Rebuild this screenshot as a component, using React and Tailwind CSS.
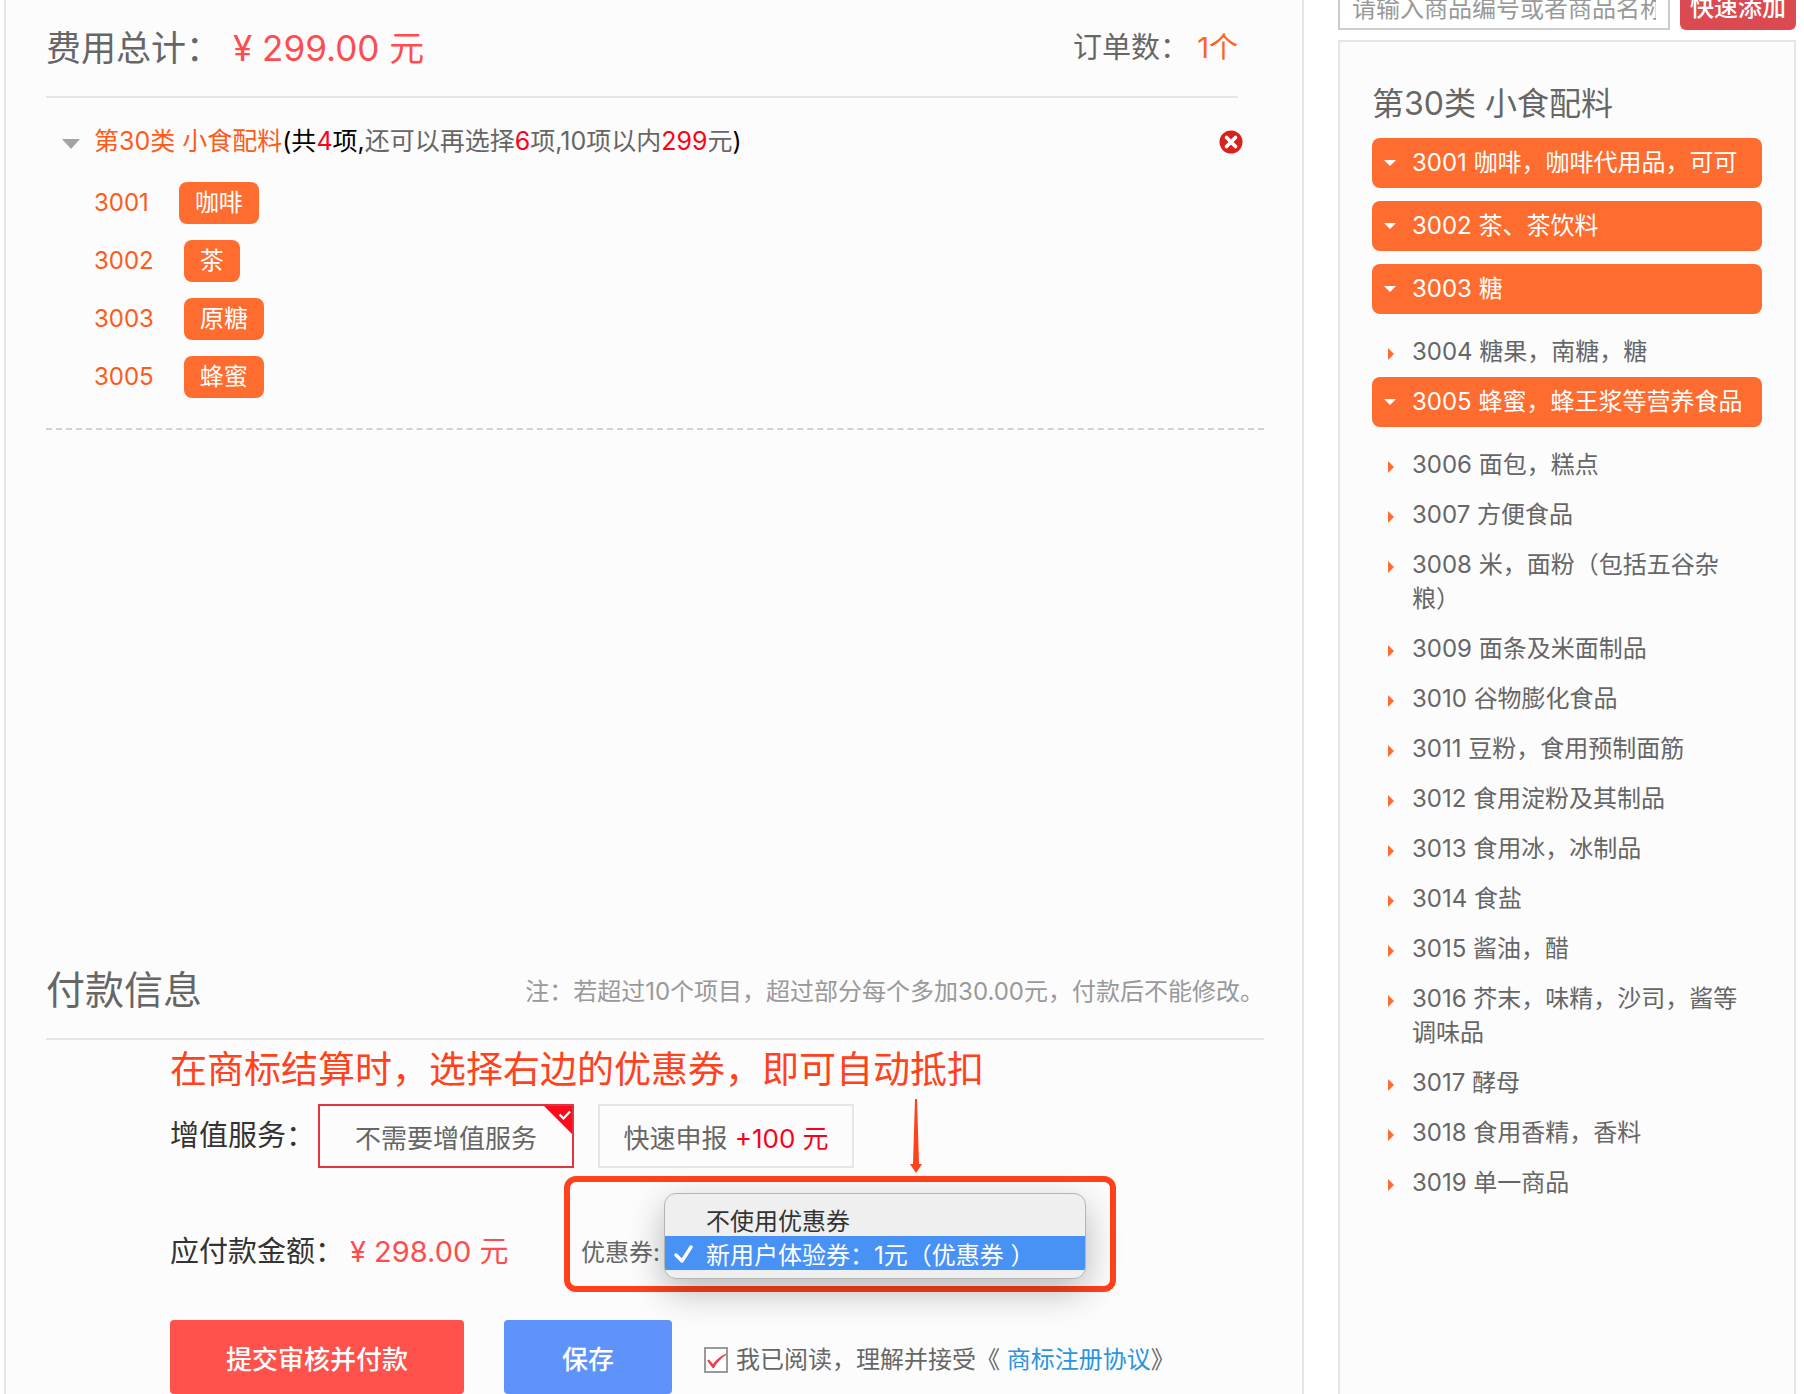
import { useState } from "react";
import clsx from "clsx";

const picked = [
    { code: "3001", name: "咖啡" },
    { code: "3002", name: "茶" },
    { code: "3003", name: "原糖" },
    { code: "3005", name: "蜂蜜" },
];

const groups = [
    { code: "3001", name: "咖啡，咖啡代用品，可可", active: true },
    { code: "3002", name: "茶、茶饮料", active: true },
    { code: "3003", name: "糖", active: true },
    { code: "3004", name: "糖果，南糖，糖" },
    { code: "3005", name: "蜂蜜，蜂王浆等营养食品", active: true },
    { code: "3006", name: "面包，糕点" },
    { code: "3007", name: "方便食品" },
    { code: "3008", name: "米，面粉（包括五谷杂粮）" },
    { code: "3009", name: "面条及米面制品" },
    { code: "3010", name: "谷物膨化食品" },
    { code: "3011", name: "豆粉，食用预制面筋" },
    { code: "3012", name: "食用淀粉及其制品" },
    { code: "3013", name: "食用冰，冰制品" },
    { code: "3014", name: "食盐" },
    { code: "3015", name: "酱油，醋" },
    { code: "3016", name: "芥末，味精，沙司，酱等调味品" },
    { code: "3017", name: "酵母" },
    { code: "3018", name: "食用香精，香料" },
    { code: "3019", name: "单一商品" },
];

const CloseIcon = () => (
    <svg viewBox="0 0 24 24" className="size-6">
        <circle cx="12" cy="12" r="11.5" fill="#d6231f" />
        <path d="M7.500 7.500l9 9M16.500 7.500l-9 9" stroke="#fff" strokeWidth="3.6" strokeLinecap="round" />
    </svg>
);

const GroupItem = ({ group }) => (
    <li className={clsx(group.active && "mb-[13px]")}>
        <button
            type="button"
            className={clsx(
                "flex w-full items-start rounded-lg py-2 pr-4 text-left text-2xl leading-[34px]",
                group.active ? "bg-[#ff6c2f] text-white" : "text-[#666]"
            )}
        >
            <span className="flex h-[34px] w-10 shrink-0 items-center pl-3">
                {group.active ? (
                    <svg viewBox="0 0 12 6" className="h-1.5 w-3">
                        <path d="M0 0h12L6 6z" fill="#fff" />
                    </svg>
                ) : (
                    <svg viewBox="0 0 6 12" className="ml-1 mt-1 h-3 w-1.5">
                        <path d="M0 0v12l6-6z" fill="#ff6c2f" />
                    </svg>
                )}
            </span>
            <span>{group.code} {group.name}</span>
        </button>
    </li>
);

const CouponSelect = () => {
    const [coupon, setCoupon] = useState("new");

    return (
        <div className="flex h-[116px] w-[552px] items-end rounded-xl border-6 border-[#ff421c] pb-[7px] pl-[11px]">
            <label htmlFor="coupon" className="mb-[9px] w-[83px] whitespace-nowrap text-2xl leading-[34px] text-[#666]">
                优惠券:
            </label>
            <div className="relative">
                <select
                    id="coupon"
                    size={2}
                    value={coupon}
                    onChange={(e) => setCoupon(e.target.value)}
                    className="block h-[86px] w-[422px] appearance-none overflow-hidden rounded-xl border border-[#b5b5b5] bg-[#efefef] py-2 text-2xl text-[#333] shadow-[0_12px_36px_rgba(0,0,0,0.28)] outline-none"
                >
                    <option value="none" className="h-[34px] min-h-0 p-0 pl-[41px] leading-[34px] checked:bg-[#4992f5] checked:text-white">
                        不使用优惠券
                    </option>
                    <option value="new" className="h-[34px] min-h-0 p-0 pl-[41px] leading-[34px] checked:bg-[#4992f5] checked:text-white">
                        新用户体验券：1元（优惠券 ）
                    </option>
                </select>
                <svg
                    viewBox="0 0 20 18"
                    className={clsx("pointer-events-none absolute left-2.5 h-[18px] w-5", coupon === "new" ? "top-[52px]" : "top-[18px]")}
                >
                    <path d="M2 10l6 6L17 2" fill="none" stroke="#fff" strokeWidth="3.4" strokeLinecap="round" strokeLinejoin="round" />
                </svg>
            </div>
        </div>
    );
};

const OrderSummary = () => (
    <section>
        <div className="mr-[26px] flex h-[98px] items-center justify-between border-b-2 border-[#e6e6e6] text-[#666]">
            <h2 className="flex gap-3 text-[35px]">
                费用总计：<span className="text-[#ff4c4f]">¥ 299.00 元</span>
            </h2>
            <p className="text-[29px]">
                订单数： <span className="text-[#ff6420]">1个</span>
            </p>
        </div>

        <div className="border-b-2 border-dashed border-[#d2d2d2] pb-[30px]">
            <div className="flex h-[84px] items-center pr-[21px] pt-1">
                <svg viewBox="0 0 18 10" className="mt-1 ml-4 mr-3.5 h-2.5 w-[18px]">
                    <path d="M0 0h18L9 10z" fill="#a3a3a3" />
                </svg>
                <h3 className="flex-1 text-[25px] text-black">
                    <span className="text-[#ff5a1a]">第30类 小食配料</span>
                    (共<span className="text-[#ff0018]">4</span>项,
                    <span className="text-[#666]">
                        还可以再选择<span className="text-[#ff0018]">6</span>项,10项以内<span className="text-[#ff0018]">299</span>元
                    </span>)
                </h3>
                <button type="button" aria-label="删除">
                    <CloseIcon />
                </button>
            </div>
            <ul className="flex flex-col gap-4 pl-12">
                {picked.map((item) => (
                    <li key={item.code} className="flex items-center gap-[30px] text-2xl text-[#ff5a1a]">
                        {item.code}
                        <span className="rounded-lg bg-[#ff6c2f] px-4 leading-[42px] text-white">{item.name}</span>
                    </li>
                ))}
            </ul>
        </div>
    </section>
);

const PaymentInfo = () => {
    const [service, setService] = useState("none");
    const [agreed, setAgreed] = useState(true);

    return (
        <section className="mt-auto">
            <div className="flex h-[98px] items-center justify-between border-b-2 border-[#e6e6e6]">
                <h2 className="text-[39px] text-[#666]">付款信息</h2>
                <p className="pt-1 text-2xl text-[#999]">
                    注：若超过10个项目，超过部分每个多加30.00元，付款后不能修改。
                </p>
            </div>

            <div className="pl-[124px]">
                <p className="mb-1 text-[37px] leading-[60px] text-[#ff421c]">
                    在商标结算时，选择右边的优惠券，即可自动抵扣
                </p>

                <div className="flex h-16 items-center">
                    <span className="w-[148px] text-[29px] text-[#333]">增值服务：</span>
                    <button
                        type="button"
                        onClick={() => setService("none")}
                        className={clsx(
                            "relative h-16 w-64 border-2 pt-1 text-[26px] text-[#666]",
                            service === "none" ? "border-[#e0373f]" : "border-[#e6e6e6]"
                        )}
                    >
                        不需要增值服务
                        {service === "none" && (
                            <svg viewBox="0 0 28 28" className="absolute right-0 top-0 size-7">
                                <path d="M0 0h28v28z" fill="#ff0a1c" />
                                <path d="M15.500 8.500l4 4L26 5.500" fill="none" stroke="#fff" strokeWidth="2.200" />
                            </svg>
                        )}
                    </button>
                    <button
                        type="button"
                        onClick={() => setService("fast")}
                        className={clsx(
                            "ml-6 h-16 w-64 border-2 pt-1 text-[26px] text-[#666]",
                            service === "fast" ? "border-[#e0373f]" : "border-[#e6e6e6]"
                        )}
                    >
                        快速申报 <span className="text-[#ff0018]">+100 元</span>
                    </button>
                    <svg viewBox="0 0 12 74" className="ml-14 h-[74px] w-3 shrink-0">
                        <path d="M5 0h2l2 65h3L6 74 0 65h3z" fill="#ff421c" />
                    </svg>
                </div>

                <div className="mt-2 flex items-start">
                    <p className="flex w-[394px] gap-1.5 whitespace-nowrap pt-[54px] text-[29px] leading-[44px] text-[#333]">
                        应付款金额：<span className="text-[#ff4c4f]">¥ 298.00 元</span>
                    </p>
                    <CouponSelect />
                </div>

                <div className="mt-7 flex items-center">
                    <button type="button" className="h-[74px] w-[294px] rounded bg-[#ff524d] pt-1 text-[26px] font-medium text-white">
                        提交审核并付款
                    </button>
                    <button type="button" className="ml-10 h-[74px] w-[168px] rounded bg-[#5e94f9] pt-1 text-[26px] font-medium text-white">
                        保存
                    </button>
                    <div className="ml-8 flex items-center gap-2 pt-1.5 text-2xl text-[#666]">
                        <span className="relative flex">
                            <input
                                id="agree"
                                type="checkbox"
                                checked={agreed}
                                onChange={(e) => setAgreed(e.target.checked)}
                                className="h-[26px] w-6 appearance-none border-2 border-[#999] bg-white"
                            />
                            {agreed && (
                                <svg viewBox="0 0 24 26" className="pointer-events-none absolute inset-0">
                                    <path d="M3 13.500l2-1 4 4.500C12 13 16 9 22 6.500v1.500C17 11.500 12.500 16 10 21H8.500z" fill="#f0404c" />
                                </svg>
                            )}
                        </span>
                        <p>
                            <label htmlFor="agree">我已阅读，理解并接受《</label>{" "}
                            <a href="#agreement" className="text-[#2b94dc]">商标注册协议</a>》
                        </p>
                    </div>
                </div>
            </div>
        </section>
    );
};

const Sidebar = () => (
    <aside className="flex w-[458px] shrink-0 flex-col">
        <form className="-mt-3.5 mb-2.5 flex gap-2.5" onSubmit={(e) => e.preventDefault()}>
            <input
                type="text"
                aria-label="商品编号或名称"
                placeholder="请输入商品编号或者商品名称"
                className="h-11 min-w-0 flex-1 border-2 border-[#ccc] bg-white px-3 text-2xl placeholder:text-[#999]"
            />
            <button type="submit" className="h-11 w-[116px] rounded-md bg-[#db4a50] text-2xl font-medium text-white">
                快速添加
            </button>
        </form>
        <div className="flex-1 border-x-2 border-t-2 border-[#e6e6e6] bg-[#fcfcfc] px-8 pt-[38px]">
            <h2 className="mb-2.5 text-[32px] leading-[48px] text-[#666]">第30类 小食配料</h2>
            <ul>
                {groups.map((group) => (
                    <GroupItem key={group.code} group={group} />
                ))}
            </ul>
        </div>
    </aside>
);

const App = () => (
    <div className="flex min-h-screen gap-[34px] overflow-hidden bg-white pl-1 pr-2 font-['Inter','Noto_Sans_CJK_SC',sans-serif]">
        <main className="flex min-w-0 flex-1 flex-col border-x-2 border-[#e6e6e6] bg-[#fcfcfc] pl-10 pr-[38px]">
            <OrderSummary />
            <PaymentInfo />
        </main>
        <Sidebar />
    </div>
);

export default App;
